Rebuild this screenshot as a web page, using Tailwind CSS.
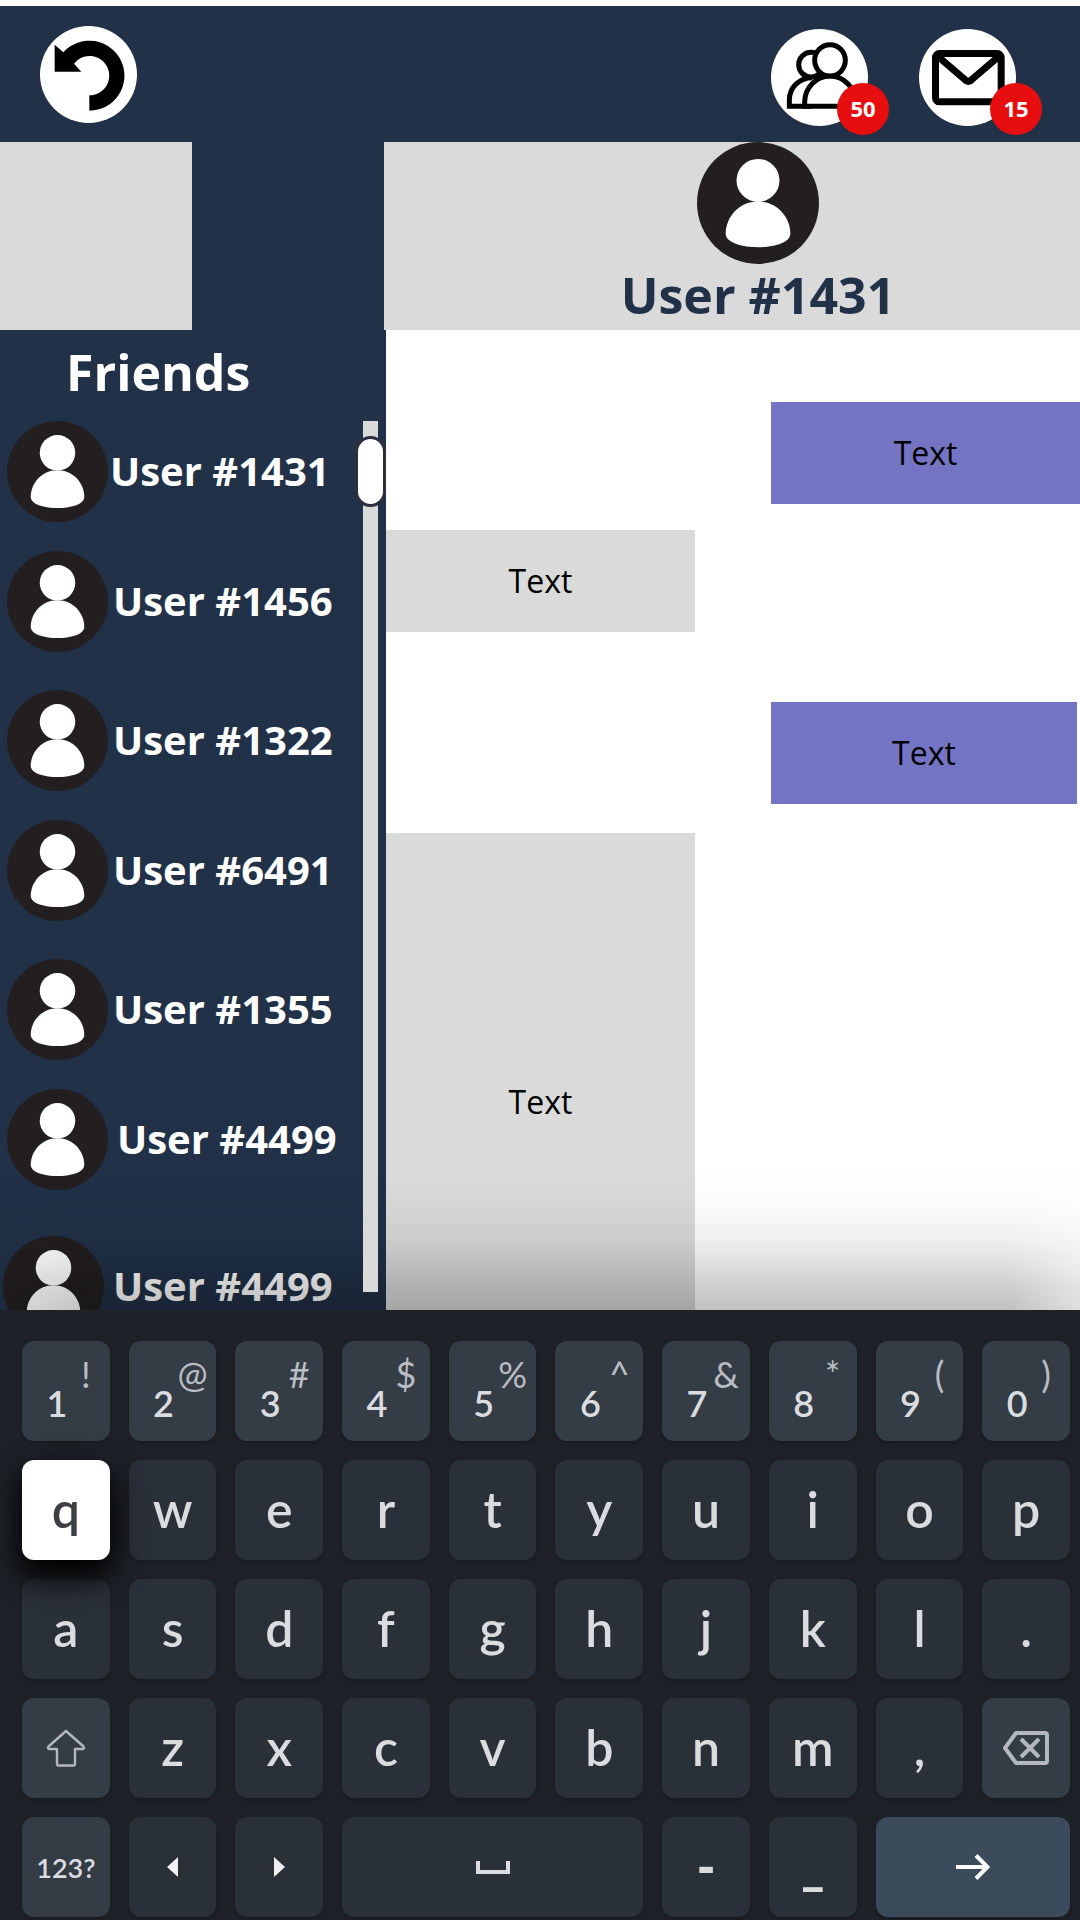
<!DOCTYPE html>
<html lang="en">
<head>
<meta charset="utf-8">
<meta name="viewport" content="width=device-width, initial-scale=1">
<title>Messages</title>
<script src="https://cdn.jsdelivr.net/npm/@tailwindcss/browser@4"></script>
</head>
<body class="flex h-screen flex-col overflow-hidden bg-white pt-[6px] font-['Open_Sans',sans-serif]">

<svg class="hidden" aria-hidden="true">
  <symbol id="avatar" viewBox="0 0 100 100">
    <circle cx="50" cy="50" r="50" fill="#231f20"/>
    <circle cx="50" cy="31.5" r="17.6" fill="#fff"/>
    <path fill="#fff" d="M50 48.7C66 48.7 76.5 62 76.5 75C76.5 83 62 86.2 50 86.2S23.5 83 23.5 75C23.5 62 34 48.7 50 48.7Z"/>
  </symbol>
</svg>

<header class="flex h-[136px] shrink-0 items-center justify-between bg-[#213147] pl-10 pr-16">
  <button aria-label="Back" class="size-[97px] rounded-full bg-white">
    <svg class="size-full" viewBox="121 76 291 291"><path d="M269 330A105 105 0 1 0 191 155L165 132V213H245L223 189A59 59 0 1 1 269 284Z"/></svg>
  </button>
  <nav class="flex gap-[51px] pt-[6px]">
    <button aria-label="Friends, 50 new" class="relative size-[97px] rounded-full bg-white">
      <svg class="size-full" viewBox="93 87 291 291" fill="#fff" stroke="#000" stroke-width="15">
        <circle cx="213" cy="194" r="37"/>
        <path d="M215 319H148V300C148 262 178 233 217 233"/>
        <path d="M194 319V306C194 264 228 228 270 228S346 264 346 306V319Z"/>
        <ellipse cx="270" cy="181" rx="46" ry="47"/>
      </svg>
      <span class="absolute left-[66px] top-[54px] flex size-[52px] items-center justify-center rounded-full bg-[#e60e0e] text-[22px] font-bold text-white">50</span>
    </button>
    <button aria-label="Mail, 15 new" class="relative size-[97px] rounded-full bg-white">
      <svg class="size-full" viewBox="537 89 291 291" fill="none" stroke="#000" stroke-width="21" stroke-linejoin="round">
        <rect x="586.500" y="162.500" width="197" height="145" rx="12"/>
        <path d="M590 168L675 241Q685 251 695 241L780 168"/>
      </svg>
      <span class="absolute left-[71px] top-[54px] flex size-[52px] items-center justify-center rounded-full bg-[#e60e0e] text-[22px] font-bold text-white">15</span>
    </button>
  </nav>
</header>

<div class="flex h-[188px] shrink-0 bg-[#213147]">
  <div class="w-48 bg-[#dadada]"></div>
  <div class="ml-48 flex flex-1 flex-col items-center bg-[#dadada] pl-[52px]">
    <svg class="size-[122px]" aria-hidden="true"><use href="#avatar"/></svg>
    <h1 class="text-[50px] leading-[62px] font-bold text-[#213147]">User #1431</h1>
  </div>
</div>

<main class="relative flex min-h-0 flex-1 overflow-hidden">
  <aside class="flex w-[386px] shrink-0 bg-[#213147]">
    <div class="flex-1">
      <h2 class="pt-[11px] pb-[18px] pl-[66px] text-[50px] leading-[62px] font-bold text-white">Friends</h2>
      <ul id="friends" class="pl-[7px] text-[40px] font-bold whitespace-nowrap text-white [&_a]:flex [&_a]:h-[100px] [&_a]:items-center [&_svg]:size-[101px] [&_svg]:shrink-0">
        <li class="mb-[30px]"><a href="#u1431" class="gap-[2px]"><svg aria-hidden="true"><use href="#avatar"/></svg>User #1431</a></li>
        <li class="mb-[39px]"><a href="#u1456" class="gap-[5px]"><svg aria-hidden="true"><use href="#avatar"/></svg>User #1456</a></li>
        <li class="mb-[30px]"><a href="#u1322" class="gap-[5px]"><svg aria-hidden="true"><use href="#avatar"/></svg>User #1322</a></li>
        <li class="mb-[39px]"><a href="#u6491" class="gap-[5px]"><svg aria-hidden="true"><use href="#avatar"/></svg>User #6491</a></li>
        <li class="mb-[30px]"><a href="#u1355" class="gap-[5px]"><svg aria-hidden="true"><use href="#avatar"/></svg>User #1355</a></li>
        <li class="mb-[47px]"><a href="#u4499" class="gap-[9px]"><svg aria-hidden="true"><use href="#avatar"/></svg>User #4499</a></li>
        <li class="-ml-1"><a href="#u4499b" class="gap-[9px]"><svg aria-hidden="true"><use href="#avatar"/></svg>User #4499</a></li>
      </ul>
    </div>
    <div role="scrollbar" aria-label="Friends list" aria-controls="friends" aria-valuenow="0" class="relative z-10 mt-[91px] mb-[18px] flex w-[31px] justify-center">
      <div class="w-[15px] bg-[#dadada]"></div>
      <div class="absolute top-[15px] h-[71px] w-[31px] rounded-2xl border-[3px] border-[#2f2e3d] bg-white"></div>
    </div>
  </aside>

  <section aria-label="Conversation" class="flex flex-1 flex-col overflow-hidden bg-white pt-[72px] text-[32px] text-black [&>p]:flex [&>p]:shrink-0 [&>p]:items-center [&>p]:justify-center">
    <p class="h-[102px] w-[44.5%] self-end bg-[#7474c5]">Text</p>
    <p class="mt-[26px] h-[102px] w-[44.5%] bg-[#dadada]">Text</p>
    <p class="mt-[70px] mr-[3px] h-[102px] w-[44.1%] self-end bg-[#7474c5]">Text</p>
    <p class="mt-[29px] h-[538px] w-[44.5%] bg-[#dadada]">Text</p>
  </section>

  <div class="pointer-events-none absolute inset-x-0 bottom-0 h-[140px] bg-[linear-gradient(to_top,rgb(0_0_0/0.24),rgb(0_0_0/0.2)_20px,rgb(0_0_0/0.13)_44px,rgb(0_0_0/0.06)_72px,rgb(0_0_0/0.015)_105px,transparent)] [mask-image:linear-gradient(to_right,rgb(0_0_0/0.6),black_90px,black_calc(100%-70px),rgb(0_0_0/0.55))]"></div>
</main>

<section aria-label="Keyboard" class="grid shrink-0 auto-rows-[100px] grid-cols-10 gap-[19px] bg-[#1e2228] pt-[31px] pr-[10px] pb-[3px] pl-[22px] font-[Lato,sans-serif] text-[50px] font-semibold text-[#dadce0] [&>button]:grid [&>button]:place-items-center [&>button]:rounded-xl [&>button]:leading-none [&>button]:shadow-[0_2px_4px_rgb(0_0_0/0.25)] [&_b]:col-start-1 [&_b]:row-start-1 [&_b]:pt-6 [&_b]:pr-[18px] [&_b]:text-[36px] [&_b]:leading-none [&_b]:font-semibold [&_sup]:static [&_sup]:col-start-1 [&_sup]:row-start-1 [&_sup]:pb-[34px] [&_sup]:pl-10 [&_sup]:text-[36px] [&_sup]:leading-none [&_sup]:font-normal [&_sup]:text-[#b9bcc3]">
  <button class="bg-[#343c46]"><b>1</b><sup>!</sup></button>
  <button class="bg-[#343c46]"><b>2</b><sup>@</sup></button>
  <button class="bg-[#343c46]"><b>3</b><sup>#</sup></button>
  <button class="bg-[#343c46]"><b>4</b><sup>$</sup></button>
  <button class="bg-[#343c46]"><b>5</b><sup>%</sup></button>
  <button class="bg-[#343c46]"><b>6</b><sup>^</sup></button>
  <button class="bg-[#343c46]"><b>7</b><sup>&amp;</sup></button>
  <button class="bg-[#343c46]"><b>8</b><sup>*</sup></button>
  <button class="bg-[#343c46]"><b>9</b><sup>(</sup></button>
  <button class="bg-[#343c46]"><b>0</b><sup>)</sup></button>

  <button class="relative z-10 bg-white pb-[2px] text-[#3c4043] shadow-[0_14px_30px_4px_#000]!">q</button>
  <button class="bg-[#2a3038] pb-[2px]">w</button>
  <button class="bg-[#2a3038] pb-[2px]">e</button>
  <button class="bg-[#2a3038] pb-[2px]">r</button>
  <button class="bg-[#2a3038] pb-[2px]">t</button>
  <button class="bg-[#2a3038] pb-[2px]">y</button>
  <button class="bg-[#2a3038] pb-[2px]">u</button>
  <button class="bg-[#2a3038] pb-[2px]">i</button>
  <button class="bg-[#2a3038] pb-[2px]">o</button>
  <button class="bg-[#2a3038] pb-[2px]">p</button>

  <button class="bg-[#2a3038] pb-[2px]">a</button>
  <button class="bg-[#2a3038] pb-[2px]">s</button>
  <button class="bg-[#2a3038] pb-[2px]">d</button>
  <button class="bg-[#2a3038] pb-[2px]">f</button>
  <button class="bg-[#2a3038] pb-[2px]">g</button>
  <button class="bg-[#2a3038] pb-[2px]">h</button>
  <button class="bg-[#2a3038] pb-[2px]">j</button>
  <button class="bg-[#2a3038] pb-[2px]">k</button>
  <button class="bg-[#2a3038] pb-[2px]">l</button>
  <button class="bg-[#2a3038] pb-[2px]">.</button>

  <button aria-label="Shift" class="bg-[#343c46]">
    <svg class="h-[38px] w-10" viewBox="0 0 40 38" fill="none" stroke="#b4b7bf" stroke-width="2.400" stroke-linejoin="round"><path d="M20 2L37.500 17.500Q39 20 36.500 20H29V35Q29 36.500 27.500 36.500H12.500Q11 36.500 11 35V20H3.500Q1 20 2.500 17.500Z"/></svg>
  </button>
  <button class="bg-[#2a3038] pb-[2px]">z</button>
  <button class="bg-[#2a3038] pb-[2px]">x</button>
  <button class="bg-[#2a3038] pb-[2px]">c</button>
  <button class="bg-[#2a3038] pb-[2px]">v</button>
  <button class="bg-[#2a3038] pb-[2px]">b</button>
  <button class="bg-[#2a3038] pb-[2px]">n</button>
  <button class="bg-[#2a3038] pb-[2px]">m</button>
  <button class="bg-[#2a3038] pb-[2px]">,</button>
  <button aria-label="Backspace" class="bg-[#343c46]">
    <svg class="h-[34px] w-[46px]" viewBox="0 0 46 34" fill="none" stroke="#b4b7bf" stroke-width="4" stroke-linejoin="round"><path d="M13 2H42Q44 2 44 4V30Q44 32 42 32H13L2 17Z"/><path d="M18 8L36 26M36 8L18 26"/></svg>
  </button>

  <button class="bg-[#343c46] text-[27px]">123?</button>
  <button aria-label="Move left" class="bg-[#2a3038]"><svg class="h-5 w-[11px]" viewBox="0 0 11 20" fill="#f1f1f3"><path d="M11 0V20L0 10Z"/></svg></button>
  <button aria-label="Move right" class="bg-[#2a3038]"><svg class="h-5 w-[11px]" viewBox="0 0 11 20" fill="#f1f1f3"><path d="M0 0V20L11 10Z"/></svg></button>
  <button aria-label="Space" class="col-span-3 bg-[#2a3038]"><svg class="h-[13px] w-[34px]" viewBox="0 0 34 13" fill="none" stroke="#dadce0" stroke-width="4"><path d="M2 0V11H32V0"/></svg></button>
  <button class="bg-[#2a3038] pb-[2px] font-extrabold">-</button>
  <button class="bg-[#2a3038] pb-[2px] font-extrabold">_</button>
  <button aria-label="Enter" class="col-span-2 bg-[#3b4b5c]"><svg class="h-[26px] w-[34px]" viewBox="0 0 34 26" fill="none" stroke="#fff" stroke-width="4"><path d="M0 13H31M20 1.500L31.500 13L20 24.500"/></svg></button>
</section>
</body>
</html>
